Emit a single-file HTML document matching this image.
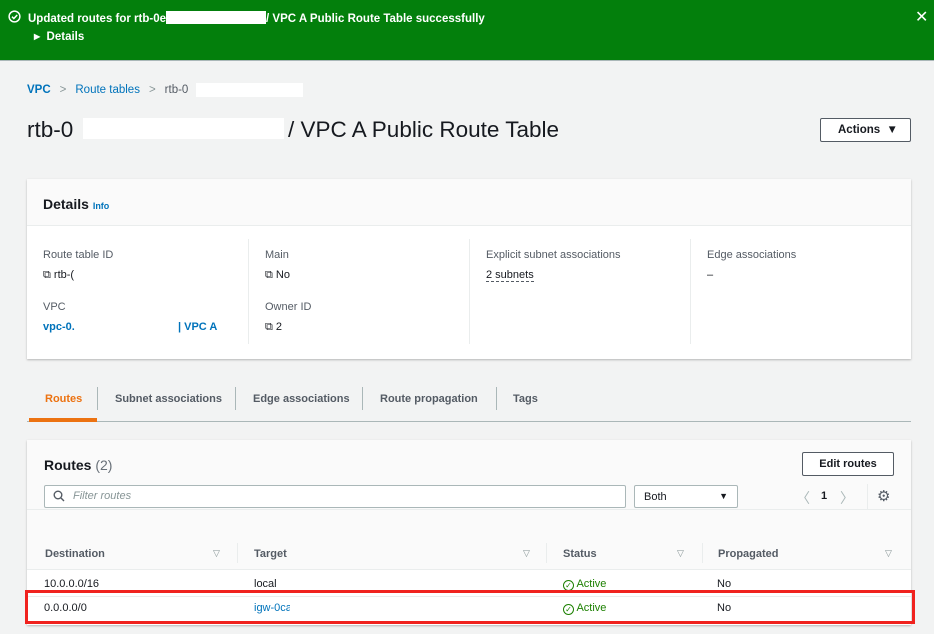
<!DOCTYPE html>
<html><head><meta charset="utf-8"><style>
*{box-sizing:border-box;margin:0;padding:0}
body{width:934px;height:634px;overflow:hidden;background:#f2f3f3;font-family:"Liberation Sans",Arial,sans-serif;color:#16191f;font-size:12px;position:relative}
.abs{position:absolute}
.link{color:#0073bb}
.b{font-weight:bold}
.white{background:#fff}
</style></head><body>
<div class="abs" style="left:0;top:0;width:934px;height:61px;background:#037f0c;border-bottom:1px solid #aab7b8"></div>
<svg class="abs" style="left:8px;top:10px" width="13" height="13" viewBox="0 0 14 14"><circle cx="7" cy="7" r="5.8" fill="none" stroke="#fff" stroke-width="1.6"/><path d="M4.3 7.2l2 2 3.6-3.8" fill="none" stroke="#fff" stroke-width="1.6"/></svg>
<div class="abs b" style="left:28px;top:11px;color:#fff;font-size:11.5px">Updated routes for rtb-0e<span style="display:inline-block;width:100px;height:13px;background:#fff;vertical-align:-2px"></span>/ VPC A Public Route Table successfully</div>
<div class="abs b" style="left:34px;top:31px;color:#fff;font-size:11.5px"><span style="font-size:8px;vertical-align:1px">▶</span>&nbsp; Details</div>
<div class="abs" style="left:915px;top:7px;color:#fff;font-size:16px">✕</div>

<div class="abs" style="left:27px;top:84px;font-size:11.5px"><span class="link b" style="font-weight:600">VPC</span><span style="color:#879596;margin:0 9px">&gt;</span><span class="link">Route tables</span><span style="color:#879596;margin:0 9px">&gt;</span><span style="color:#545b64">rtb-0</span></div>
<div class="abs white" style="left:196px;top:83px;width:107px;height:14px"></div>
<div class="abs" style="left:27px;top:117px;font-size:22.5px">rtb-0</div>
<div class="abs white" style="left:83px;top:118px;width:201px;height:21px"></div>
<div class="abs" style="left:288px;top:117px;font-size:22.5px">/ VPC A Public Route Table</div>
<div class="abs white b" style="left:820px;top:118px;width:91px;height:24px;border:1px solid #545b64;border-radius:2px;font-size:11.5px;padding:5px 0 0 17px">Actions &nbsp;▼</div>

<div class="abs white" style="left:27px;top:179px;width:884px;height:180px;box-shadow:0 1px 2px rgba(0,0,0,.25)"></div>
<div class="abs" style="left:27px;top:179px;width:884px;height:47px;background:#fafafa;border-bottom:1px solid #eaeded"></div>
<div class="abs b" style="left:43px;top:196px;font-size:14px">Details <span class="link" style="font-size:9px">Info</span></div>
<div class="abs" style="left:248px;top:239px;width:1px;height:105px;background:#eaeded"></div>
<div class="abs" style="left:469px;top:239px;width:1px;height:105px;background:#eaeded"></div>
<div class="abs" style="left:690px;top:239px;width:1px;height:105px;background:#eaeded"></div>
<div class="abs" style="left:43px;top:249px;font-size:11px;color:#545b64;line-height:13px">Route table ID</div>
<div class="abs" style="left:43px;top:269px;font-size:11px">⧉ rtb-(</div>
<div class="abs" style="left:43px;top:301px;font-size:11px;color:#545b64">VPC</div>
<div class="abs link b" style="left:43px;top:321px;font-size:11px">vpc-0.</div>
<div class="abs link b" style="left:178px;top:321px;font-size:11px">| VPC A</div>
<div class="abs" style="left:265px;top:249px;font-size:11px;color:#545b64">Main</div>
<div class="abs" style="left:265px;top:269px;font-size:11px">⧉ No</div>
<div class="abs" style="left:265px;top:301px;font-size:11px;color:#545b64">Owner ID</div>
<div class="abs" style="left:265px;top:321px;font-size:11px">⧉ 2</div>
<div class="abs" style="left:486px;top:249px;font-size:11px;color:#545b64">Explicit subnet associations</div>
<div class="abs" style="left:486px;top:269px;font-size:11px;border-bottom:1px dashed #545b64">2 subnets</div>
<div class="abs" style="left:707px;top:249px;font-size:11px;color:#545b64">Edge associations</div>
<div class="abs" style="left:707px;top:269px;font-size:11px">–</div>

<div class="abs" style="left:27px;top:421px;width:884px;height:1px;background:#aab7b8"></div>
<div class="abs b" style="left:29px;top:418px;width:68px;height:4px;background:#ec7211"></div>
<div class="abs b" style="left:45px;top:393px;font-size:11px;color:#ec7211">Routes</div>
<div class="abs" style="left:97px;top:387px;width:1px;height:23px;background:#aab7b8"></div>
<div class="abs b" style="left:115px;top:393px;font-size:11px;color:#545b64">Subnet associations</div>
<div class="abs" style="left:235px;top:387px;width:1px;height:23px;background:#aab7b8"></div>
<div class="abs b" style="left:253px;top:393px;font-size:11px;color:#545b64">Edge associations</div>
<div class="abs" style="left:362px;top:387px;width:1px;height:23px;background:#aab7b8"></div>
<div class="abs b" style="left:380px;top:393px;font-size:11px;color:#545b64">Route propagation</div>
<div class="abs" style="left:496px;top:387px;width:1px;height:23px;background:#aab7b8"></div>
<div class="abs b" style="left:513px;top:393px;font-size:11px;color:#545b64">Tags</div>

<div class="abs white" style="left:27px;top:440px;width:884px;height:185px;box-shadow:0 1px 2px rgba(0,0,0,.25)"></div>
<div class="abs" style="left:27px;top:440px;width:884px;height:130px;background:#fafafa"></div>
<div class="abs" style="left:27px;top:509px;width:884px;height:1px;background:#eaeded"></div>
<div class="abs" style="left:27px;top:569px;width:884px;height:1px;background:#eaeded"></div>
<div class="abs b" style="left:44px;top:457px;font-size:14px">Routes <span style="font-weight:normal;color:#687078">(2)</span></div>
<div class="abs white b" style="left:802px;top:452px;width:92px;height:24px;border:1px solid #545b64;border-radius:2px;font-size:11px;text-align:center;padding-top:5px">Edit routes</div>
<div class="abs white" style="left:44px;top:485px;width:582px;height:23px;border:1px solid #aab7b8;border-radius:2px"></div>
<svg class="abs" style="left:53px;top:490px" width="12" height="12" viewBox="0 0 12 12"><circle cx="5" cy="5" r="3.8" fill="none" stroke="#545b64" stroke-width="1.4"/><path d="M8 8l3 3" stroke="#545b64" stroke-width="1.4"/></svg>
<div class="abs" style="left:73px;top:490px;font-size:11px;color:#879596;font-style:italic">Filter routes</div>
<div class="abs white" style="left:634px;top:485px;width:104px;height:23px;border:1px solid #aab7b8;border-radius:2px;font-size:11px;padding:5px 0 0 9px">Both<span style="position:absolute;right:9px;top:5px;font-size:9px">▼</span></div>
<div class="abs" style="left:796px;top:488px;font-size:14px;color:#aab7b8">〈</div>
<div class="abs b" style="left:821px;top:490px;font-size:11px">1</div>
<div class="abs" style="left:840px;top:488px;font-size:14px;color:#aab7b8">〉</div>
<div class="abs" style="left:867px;top:484px;width:1px;height:25px;background:#eaeded"></div>
<div class="abs" style="left:877px;top:487px;font-size:15px;color:#545b64">⚙</div>

<div class="abs b" style="left:45px;top:548px;font-size:11px;color:#545b64">Destination</div>
<div class="abs" style="left:213px;top:548px;font-size:9px;color:#879596">▽</div>
<div class="abs" style="left:237px;top:543px;width:1px;height:20px;background:#eaeded"></div>
<div class="abs b" style="left:254px;top:548px;font-size:11px;color:#545b64">Target</div>
<div class="abs" style="left:523px;top:548px;font-size:9px;color:#879596">▽</div>
<div class="abs" style="left:546px;top:543px;width:1px;height:20px;background:#eaeded"></div>
<div class="abs b" style="left:563px;top:548px;font-size:11px;color:#545b64">Status</div>
<div class="abs" style="left:677px;top:548px;font-size:9px;color:#879596">▽</div>
<div class="abs" style="left:702px;top:543px;width:1px;height:20px;background:#eaeded"></div>
<div class="abs b" style="left:718px;top:548px;font-size:11px;color:#545b64">Propagated</div>
<div class="abs" style="left:885px;top:548px;font-size:9px;color:#879596">▽</div>

<div class="abs" style="left:44px;top:578px;font-size:11px">10.0.0.0/16</div>
<div class="abs" style="left:254px;top:578px;font-size:11px">local</div>
<div class="abs" style="left:563px;top:578px;font-size:11px;color:#1d8102"><span style="display:inline-block;width:11px;height:11px;border:1.4px solid #1d8102;border-radius:50%;font-size:8px;text-align:center;line-height:9px;vertical-align:-1px">✓</span> Active</div>
<div class="abs" style="left:717px;top:578px;font-size:11px">No</div>
<div class="abs" style="left:27px;top:596px;width:884px;height:1px;background:#eaeded"></div>
<div class="abs" style="left:44px;top:602px;font-size:11px">0.0.0.0/0</div>
<div class="abs link" style="left:254px;top:602px;font-size:11px">igw-0ca</div>
<div class="abs white" style="left:290px;top:599px;width:92px;height:16px"></div>
<div class="abs" style="left:563px;top:602px;font-size:11px;color:#1d8102"><span style="display:inline-block;width:11px;height:11px;border:1.4px solid #1d8102;border-radius:50%;font-size:8px;text-align:center;line-height:9px;vertical-align:-1px">✓</span> Active</div>
<div class="abs" style="left:717px;top:602px;font-size:11px">No</div>
<div class="abs" style="left:25px;top:590px;width:890px;height:34px;border:3px solid #f0221e"></div>
</body></html>
